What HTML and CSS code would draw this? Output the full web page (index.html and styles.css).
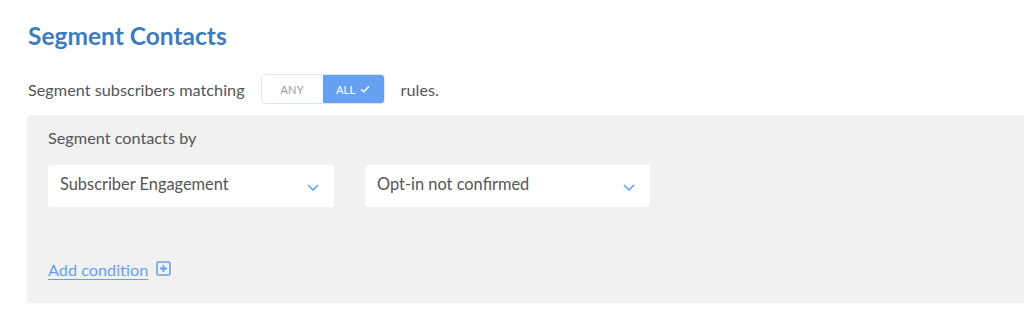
FILE: index.html
```html
<!DOCTYPE html>
<html>
<head>
<meta charset="utf-8">
<link rel="stylesheet" href="styles.css">
</head>
<body>
<div class="page">
  <h1 class="title">Segment Contacts</h1>
  <div class="match-row">
    <span class="match-label">Segment subscribers matching</span>
    <div class="toggle">
      <span class="opt opt-any">ANY</span>
      <span class="opt opt-all">ALL
        <svg class="check" width="10" height="8" viewBox="0 0 10 8"><path d="M1 4.2 L3.8 6.8 L9 1.2" fill="none" stroke="#fff" stroke-width="1.4"/></svg>
      </span>
    </div>
    <span class="match-label">rules.</span>
  </div>
  <div class="panel">
    <div class="panel-label">Segment contacts by</div>
    <div class="selects">
      <div class="select">
        <span class="select-text">Subscriber Engagement</span>
        <svg class="chev" width="12" height="7" viewBox="0 0 12 7"><path d="M1 1 L6 6 L11 1" fill="none" stroke="#66a0f0" stroke-width="1.6"/></svg>
      </div>
      <div class="select">
        <span class="select-text">Opt-in not confirmed</span>
        <svg class="chev" width="12" height="7" viewBox="0 0 12 7"><path d="M1 1 L6 6 L11 1" fill="none" stroke="#66a0f0" stroke-width="1.6"/></svg>
      </div>
    </div>
    <div class="add-row">
      <a class="add-link" href="#">Add condition</a>
      <svg class="plus" width="15" height="15" viewBox="0 0 15 15"><rect x="1" y="1" width="13" height="13" rx="1.5" fill="none" stroke="#66a0f0" stroke-width="1.6"/><path d="M7.5 4 V11 M4 7.5 H11" stroke="#66a0f0" stroke-width="1.8"/></svg>
    </div>
  </div>
</div>
</body>
</html>
```
FILE: styles.css
```css
html, body {
  margin: 0;
  padding: 0;
  background: #fff;
  overflow: hidden;
}
body {
  font-family: Lato, "Open Sans", sans-serif;
  color: #555;
}
.page {
  padding: 20px 0 0 28px;
}
.title {
  margin: 0;
  font-size: 24.5px;
  font-weight: 700;
  color: #3d7cc0;
  line-height: 32px;
}
.match-row {
  display: flex;
  align-items: center;
  margin-top: 22px;
  height: 30px;
}
.match-label {
  font-size: 16.25px;
  color: #555;
}
.toggle {
  display: flex;
  margin: 0 16px 0 16px;
  height: 30px;
  border: 1px solid #dbe8fb;
  border-radius: 4px;
  overflow: hidden;
  box-sizing: border-box;
}
.opt {
  width: 61px;
  display: flex;
  align-items: center;
  justify-content: center;
  font-size: 11px;
  letter-spacing: 0.2px;
}
.opt-any {
  color: #9a9a9a;
  background: #fff;
}
.opt-all {
  color: #fff;
  background: #66a0f0;
  gap: 5px;
}
.panel {
  margin: 11px -20px 0 -1px;
  background: #f1f1f1;
  border-radius: 4px;
  padding: 12px 0 0 21px;
  height: 176px;
}
.panel-label {
  font-size: 16.25px;
  line-height: 22px;
  color: #555;
}
.selects {
  display: flex;
  gap: 31px;
  margin-top: 16px;
}
.select {
  width: 286px;
  height: 42px;
  background: #fff;
  border-radius: 3px;
  display: flex;
  align-items: center;
  justify-content: space-between;
  padding: 0 15px 0 12px;
  box-sizing: border-box;
  font-size: 16.4px;
  color: #555;
}
.select-text { margin-top: -5px; }
.select:nth-child(2) { width: 285px; }
.chev { margin-top: 3px; }
.add-row {
  display: flex;
  align-items: center;
  gap: 8px;
  margin-top: 53px;
}
.add-link {
  font-size: 16.25px;
  color: #66a0f0;
  text-decoration: underline;
  text-underline-offset: 3px;
}
.plus { margin-top: -2px; }
```
